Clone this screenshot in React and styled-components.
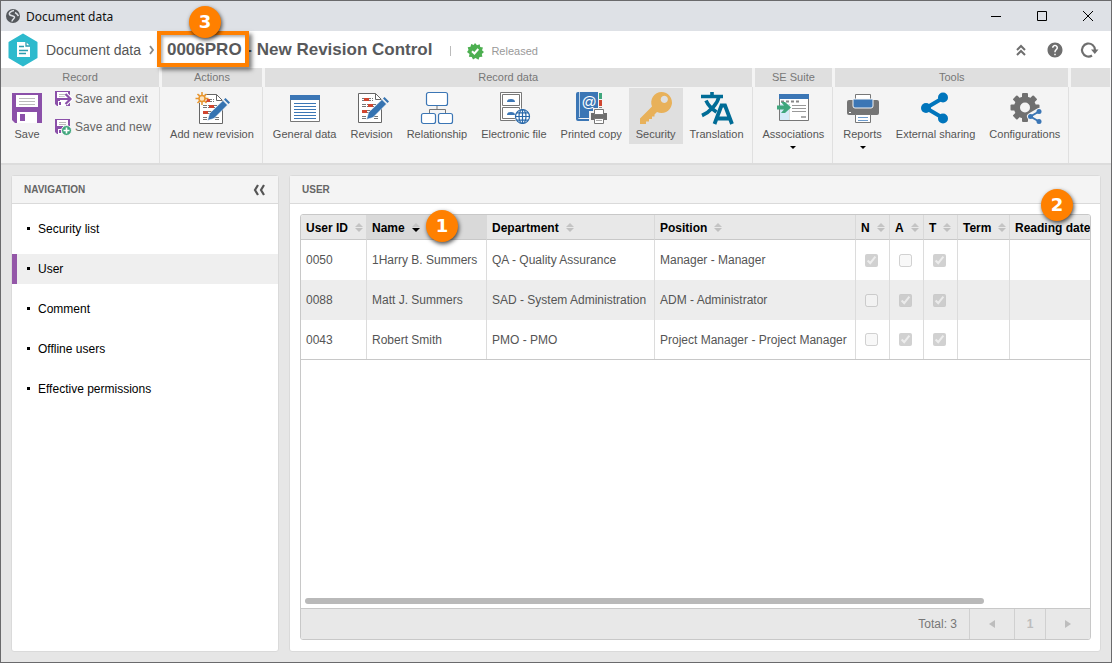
import React from "react";
import styled, { createGlobalStyle } from "styled-components";
import { MdHelp } from "react-icons/md";

const GlobalStyle = createGlobalStyle`
    * {
        box-sizing: border-box;
    }

    body {
        margin: 0;
        font-family: "Liberation Sans", Arial, sans-serif;
        font-size: 12px;
        color: #555;
    }

    button {
        font: inherit;
        color: inherit;
        background: none;
        border: 0;
        padding: 0;
    }

    svg {
        display: block;
        flex: none;
    }
`;

const Window = styled.div`
    display: flex;
    flex-direction: column;
    min-height: 100vh;
    border: 1px solid #6a6a6c;
    background: #e6e6e6;
`;

const TitleBar = styled.div`
    display: flex;
    align-items: center;
    height: 30px;
    padding-left: 5px;
    gap: 6px;
    background: #dee1e6;
    color: #111;
    font-family: "Noto Sans", sans-serif;
    font-size: 12px;
`;

const WindowControls = styled.div`
    display: flex;
    margin-left: auto;
`;

const IconButton = styled.button`
    display: flex;
    align-items: center;
    justify-content: center;
    width: ${(props) => props.$width};
    height: 30px;
`;

const Header = styled.header`
    display: flex;
    align-items: center;
    height: 37px;
    padding: 0 5px 0 7px;
    background: white;
`;

const Crumb = styled.a`
    margin: 0 8px;
    font-size: 14px;
    line-height: 20px;
    color: #555;
    text-decoration: none;
`;

const Title = styled.h1`
    margin: 0 0 0 12px;
    font-size: 17px;
    line-height: 20px;
    font-weight: 700;
    color: #58595b;
`;

const Marked = styled.span`
    position: relative;
    display: inline-block;
`;

const Frame = styled.span`
    position: absolute;
    inset: -9px -7px -7px -10px;
    border: 4px solid #ff8000;
    box-shadow: 3px 3px 4px rgba(0, 0, 0, 0.5), inset 2px 2px 3px rgba(0, 0, 0, 0.3);
`;

const Badge = styled.span`
    position: absolute;
    z-index: 2;
    top: ${(props) => props.$top};
    left: ${(props) => props.$left};
    right: ${(props) => props.$right};
    width: 32px;
    height: 32px;
    border-radius: 50%;
    background: #ff8000;
    box-shadow: 1px 2px 4px rgba(0, 0, 0, 0.7);
    color: white;
    font-family: "DejaVu Sans", sans-serif;
    font-size: 18px;
    font-weight: 700;
    line-height: 32px;
    text-align: center;
`;

const Status = styled.div`
    display: flex;
    align-items: center;
    gap: 8px;
    margin-left: 18px;
    padding-top: 3px;
    font-size: 11px;
    color: #999;
`;

const Divider = styled.span`
    width: 1px;
    height: 10px;
    margin-right: 8px;
    background: #bbb;
`;

const HeaderActions = styled.div`
    display: flex;
    margin-left: auto;
    color: #6e6e6e;
`;

const Ribbon = styled.div`
    display: flex;
    height: 97px;
    background: #f4f4f4;
    border-bottom: 2px solid #dcdcdc;
`;

const Group = styled.section`
    display: flex;
    flex-direction: column;
    flex: ${(props) => (props.$fill ? "1" : "none")};
`;

const GroupTitle = styled.h2`
    height: 19px;
    margin: 0 1px 0 2px;
    background: #dfdfdf;
    color: #777;
    font-size: 11px;
    font-weight: 400;
    line-height: 19px;
    text-align: center;

    ${Group}:first-child & {
        margin-left: 0;
    }
`;

const GroupBody = styled.div`
    display: flex;
    flex: 1;
    align-items: flex-start;
    padding: 1px 1px 0 3px;
    border-right: 1px solid #e0e0e0;

    ${Group}:last-child & {
        border-right: 0;
    }
`;

const Tool = styled.button`
    display: flex;
    flex-direction: column;
    align-items: center;
    height: 56px;
    padding: 4px 7px 0;
    background: ${(props) => (props.$active ? "#dfdfdf" : "none")};
    font-size: 11px;
    line-height: 20px;
    white-space: nowrap;
`;

const Caret = styled.span`
    flex: none;
    margin-top: 2px;
    border: 3px solid transparent;
    border-top-color: black;
`;

const SmallTools = styled.div`
    display: flex;
    flex-direction: column;
    gap: 8px;
    padding: 1px 7px 0 5px;
`;

const SmallTool = styled.button`
    display: flex;
    align-items: center;
    gap: 4px;
    height: 20px;
    font-size: 12px;
    color: #666;
    white-space: nowrap;
`;

const Main = styled.main`
    display: grid;
    flex: 1;
    grid-template-columns: 268px minmax(0, 1fr);
    gap: 10px;
    padding: 10px;
`;

const Panel = styled.section`
    position: relative;
    display: flex;
    flex-direction: column;
    border: 1px solid #dadada;
    border-radius: 3px;
    background: white;
`;

const PanelHeader = styled.div`
    display: flex;
    align-items: center;
    justify-content: space-between;
    height: 28px;
    padding: 0 12px;
    border-bottom: 1px solid #dadada;
    background: #f4f4f4;
`;

const PanelTitle = styled.h2`
    margin: 0;
    color: #666;
    font-size: 10px;
    font-weight: 700;
`;

const NavList = styled.ul`
    display: flex;
    flex-direction: column;
    gap: 10px;
    margin: 0;
    padding: 10px 0;
    list-style: none;
`;

const NavLink = styled.a`
    display: flex;
    align-items: center;
    height: 30px;
    gap: 8px;
    padding-left: 10px;
    border-left: 5px solid ${(props) => (props.$active ? "#9457a8" : "transparent")};
    background: ${(props) => (props.$active ? "#efefef" : "none")};
    color: black;
    text-decoration: none;

    &::before {
        content: "";
        width: 3px;
        height: 3px;
        margin-bottom: 2px;
        background: black;
    }
`;

const Grid = styled.div`
    display: flex;
    flex: 1;
    flex-direction: column;
    margin: 10px 9px 11px 10px;
    border: 1px solid #c8c8c8;
    border-radius: 3px;
    overflow: hidden;
`;

const TableArea = styled.div`
    flex: 1;
    overflow: hidden;
`;

const Table = styled.table`
    width: 100%;
    min-width: 910px;
    table-layout: fixed;
    border-collapse: separate;
    border-spacing: 0;
    border-bottom: 1px solid #c8c8c8;
`;

const HeadCell = styled.th`
    width: ${(props) => props.$width};
    height: 25px;
    padding: 1px 0 0 5px;
    border-right: 1px solid #d9d9d9;
    border-bottom: 1px solid #c8c8c8;
    background: ${(props) => (props.$sorted ? "#d9d9d9" : "#e8e8e8")};
    text-align: left;
`;

const SortButton = styled.button`
    display: flex;
    align-items: center;
    gap: 7px;
    color: black;
    font-weight: 700;
    white-space: nowrap;
`;

const Row = styled.tr`
    &:nth-child(even) {
        background: #ededed;
    }
`;

const Cell = styled.td`
    height: 40px;
    padding: 0 0 0 ${(props) => (props.$check ? "9px" : "5px")};
    border-right: 1px solid #dcdcdc;
    white-space: nowrap;

    ${Row}:last-child & {
        height: 39px;
    }
`;

const Check = styled.input`
    display: block;
    width: 13px;
    height: 13px;
    margin: 0;
`;

const ScrollTrack = styled.div`
    padding: 0 4px 4px;
`;

const ScrollThumb = styled.div`
    width: 87%;
    height: 6px;
    border-radius: 3px;
    background: #b9b9b9;
`;

const Footer = styled.div`
    display: flex;
    align-items: stretch;
    justify-content: flex-end;
    height: 31px;
    border-top: 1px solid #c8c8c8;
    background: #e8e8e8;
    color: #777;
    line-height: 30px;
`;

const Total = styled.span`
    padding-right: 12px;
`;

const PageButton = styled.button`
    display: flex;
    align-items: center;
    justify-content: center;
    width: ${(props) => (props.$number ? "31px" : "45px")};
    border-left: 1px solid #d0d0d0;
    color: #bdbdbd;
    font-weight: 700;
`;

const Icon = ({ children, size = 32, box = size }) => (
    <svg width={size} height={size} viewBox={`0 0 ${box} ${box}`} fill="none" overflow="visible" aria-hidden="true">
        {children}
    </svg>
);

const SaveIcon = () => (
    <Icon>
        <path d="M1 1h30v30H4l-3-3z" fill="#8b50a9" />
        <path d="M5 3h22v12H5zM6 20h20v11H6z" fill="#fff" />
        <path d="M8 6.5h16M8 9.5h16M8 12.5h16" stroke="#bbb" />
        <path d="M9 22h5v7H9z" fill="#8b50a9" />
    </Icon>
);

const SmallSaveIcon = ({ plus }) => (
    <Icon size={16}>
        <path d="M0 0h15v15H2l-2-2z" fill="#8b50a9" />
        <path d="M2 1h11v6H2zM3 10h8v5H3z" fill="#fff" />
        <path d="M4 3.5h7M4 5.5h7" stroke="#bbb" />
        <path d="M4 11h2v3H4z" fill="#8b50a9" />
        {plus ? (
            <>
                <circle cx="11.5" cy="11.5" r="5" fill="#3fa67c" stroke="#f4f4f4" />
                <path d="M8.5 11.5h6M11.5 8.5v6" stroke="#fff" strokeWidth="1.6" />
            </>
        ) : (
            <>
                <path d="M5 8h10M10.5 3l5 5-5 5" stroke="#fff" strokeWidth="4.500" />
                <path d="M5 8h10M10.5 3l5 5-5 5" stroke="#8b50a9" strokeWidth="2.200" />
            </>
        )}
    </Icon>
);

const RevisionIcon = ({ star }) => (
    <Icon>
        <g transform={star ? "translate(1 1)" : undefined}>
            <path d="M2.5 1.5h17l6 6v23h-23z" fill="#fff" stroke="#666" />
            <path d="M19.5 1.5v6h6" stroke="#666" />
            <path d="M6 6.5h11M6 8.5h11M6 12.5h16M6 14.5h12M6 18.5h11M6 20.5h9M6 24.5h5M6 26.5h5M18 24.5h4M18 26.5h4" stroke="#777" strokeDasharray="4 1" />
            <path d="M8 6h5v3H8zM12 12h5v3h-5zM6 18h5v3H6z" fill="#d0452f" />
            <path d="M10.500 27.500l2-7L26 7.500l4.500 4.500L17 25.500z" fill="#3573b1" stroke="#fff" strokeWidth=".6" />
            <path d="M27 6.500l1.500-1.500 4.500 4.500-1.500 1.500z" fill="#3573b1" />
        </g>
        {star && (
            <>
                <circle cx="6" cy="6.500" r="5" fill="#f4f4f4" />
                <path d="M6 0v13M-.5 6.500h13M1.500 2l9 9M10.500 2l-9 9" stroke="#e8952c" strokeWidth="1.500" />
                <circle cx="6" cy="6.500" r="3" fill="#fbe3c0" stroke="#e8952c" strokeWidth="1.500" />
            </>
        )}
    </Icon>
);

const GeneralIcon = () => (
    <Icon>
        <path d="M1.500 3.500h29v26h-29z" fill="#fff" stroke="#777" />
        <path d="M1 3h30v5H1z" fill="#3b76b5" />
        <path d="M5 11.500h22M5 14.500h22M5 17.500h22M5 20.500h22M5 23.500h22M5 26.500h22" stroke="#3b76b5" />
    </Icon>
);

const RelationshipIcon = () => (
    <Icon>
        <path d="M16 14v3.500M8.500 21v-3.500h16V21" stroke="#777" />
        <g fill="#fff" stroke="#3b76b5" strokeWidth="1.200">
            <rect x="5.500" y=".5" width="21" height="13" rx="2" />
            <rect x=".5" y="21.500" width="14" height="10" rx="2" />
            <rect x="17.500" y="21.500" width="14" height="10" rx="2" />
        </g>
    </Icon>
);

const ElectronicIcon = () => (
    <Icon>
        <path d="M2.500.5h21v28h-21z" fill="#fff" stroke="#777" />
        <path d="M4.500 2.500h17v11h-17zM4.500 15.500h17v11h-17z" stroke="#777" />
        <path d="M9 10q0-3 4-3t4 3zM9 23q0-3 4-3t4 3z" fill="#3b76b5" />
        <circle cx="24.500" cy="24.500" r="8" fill="#f4f4f4" />
        <g stroke="#2868a9" strokeWidth="1.200">
            <circle cx="24.500" cy="24.500" r="7" fill="#fff" />
            <ellipse cx="24.500" cy="24.500" rx="3.500" ry="7" />
            <path d="M24.500 17.500v14M17.500 24.500h14M18.500 20.800h12M18.500 28.200h12" />
        </g>
    </Icon>
);

const PrintedIcon = () => (
    <Icon>
        <path d="M3 0h20v26H5q-2 0-2 1h17v2H3q-2 0-2-2V2q0-2 2-2z" fill="#3b76b5" />
        <path d="M4.500 0v25" stroke="#b9d2ea" />
        <path d="M24 1h3v6h-3z" fill="#3fa67c" />
        <path d="M24 8h3v6h-3z" fill="#d0452f" />
        <path d="M24 15h3v4h-3z" fill="#888" />
        <text x="14" y="15" fill="#fff" fontSize="15" textAnchor="middle" fontFamily="Liberation Sans, sans-serif">@</text>
        <path d="M14 19h4v-3h12v3h3v11h-4v3H18v-3h-4z" fill="#f4f4f4" />
        <path d="M16 21h16v7H16z" fill="#6d6d6d" />
        <path d="M19.500 17.500h9v5h-9zM19.500 26.500h9v5h-9z" fill="#fff" stroke="#777" />
        <path d="M21 28.500h6" stroke="#aaa" />
    </Icon>
);

const KeyIcon = () => (
    <Icon>
        <path
            d="M21.500 0a10.500 10.500 0 1 1-4.500 20l-2.500 2.500v2h-2.500v2.500H9v2.500H6V32H0v-5.500L12 14.500A10.500 10.500 0 0 1 21.500 0zm2.800 3.800a3.600 3.600 0 1 0 .01 0z"
            fill="#e8b15a"
        />
    </Icon>
);

const TranslationIcon = () => (
    <Icon>
        <g stroke="#006c96" strokeWidth="3.600">
            <path d="M0 4.500h22M11 0v4.500M18 4.500C16.500 12 9 20 1 23.500M5 8.500C7 13 11 17 15.500 20" />
            <path d="M13.500 32l7-18.500h3.500l7 18.500M17 26.500h11" strokeWidth="3.800" />
        </g>
    </Icon>
);

const AssociationsIcon = () => (
    <Icon>
        <path d="M2.500 2.500h29v26h-29z" fill="#fff" stroke="#777" />
        <path d="M2 2h30v5H2z" fill="#3b76b5" />
        <path d="M4 9.500h18" stroke="#888" strokeWidth="2" strokeDasharray="3 2" />
        <path d="M3 12h9v16H3z" fill="#d5eaf8" />
        <path d="M12.500 12v16" stroke="#ddd" />
        <path d="M15 13.500h14M15 16.500h14M15 19.500h14" stroke="#999" />
        <path d="M24 24h5v2h-5z" fill="#aaa" />
        <path d="M0 13.500h7L4 10h4l6 5.500L8 21H4l3-3.500H0z" fill="#3fa67c" />
    </Icon>
);

const ReportsIcon = () => (
    <Icon>
        <path d="M2 8h28q2 0 2 2v11q0 2-2 2H2q-2 0-2-2V10q0-2 2-2z" fill="#757575" />
        <path d="M8.500 2.500h15v8h-15z" fill="#fff" stroke="#777" />
        <path d="M6 7h20v7q0 2-2 2H8q-2 0-2-2z" fill="#3b76b5" stroke="#f4f4f4" />
        <path d="M2 20.500h2" stroke="#fff" />
        <path d="M8.500 22.500h15v8h-15z" fill="#fff" stroke="#777" />
        <path d="M11 25.500h10M11 28.500h10" stroke="#6d9bcc" />
    </Icon>
);

const ShareIcon = () => (
    <Icon>
        <path d="M23 6L6 16l17 10" stroke="#0075bc" strokeWidth="4" />
        <g fill="#0075bc">
            <circle cx="6" cy="16" r="5" />
            <circle cx="23" cy="5.500" r="5" />
            <circle cx="23" cy="26.500" r="5" />
        </g>
    </Icon>
);

const ConfigIcon = () => (
    <Icon>
        <g fill="#707070">
            {[0, 45, 90, 135].map((angle) => (
                <rect key={angle} x="13" y="1" width="6" height="29" rx="1" transform={`rotate(${angle} 16 15.5)`} />
            ))}
            <circle cx="16" cy="15.500" r="11" />
        </g>
        <circle cx="16" cy="15.500" r="5" fill="#f4f4f4" />
        <path d="M30 19.500L21.500 24.500l8.500 5" stroke="#f4f4f4" strokeWidth="7" strokeLinejoin="round" strokeLinecap="round" />
        <path d="M30 19.500L21.500 24.500l8.500 5" stroke="#3b76b5" strokeWidth="2" />
        <g fill="#3b76b5">
            <circle cx="21.500" cy="24.500" r="2.500" />
            <circle cx="30" cy="19.500" r="2.500" />
            <circle cx="30" cy="29.500" r="2.500" />
        </g>
    </Icon>
);

const GlobeIcon = () => (
    <Icon size={14}>
        <circle cx="7" cy="7" r="7" fill="#54585c" />
        <path d="M8 1.500C5 2 2.500 4 3.500 5.500S8 6.500 8.500 8 6 10.500 6 12.500" stroke="#dee1e6" strokeWidth="1.500" />
        <path d="M9 3.500q2 1 3.500 3.500" stroke="#dee1e6" strokeWidth="1.500" />
    </Icon>
);

const DocumentIcon = () => (
    <svg width="30" height="34" viewBox="0 0 30 34" fill="none" aria-hidden="true">
        <path d="M15 1.500L28.500 9.500v15L15 32.500 1.500 24.500v-15z" fill="#2dbacd" stroke="#2dbacd" strokeWidth="2" strokeLinejoin="round" />
        <path d="M9 9h9l4 4v11H9z" fill="#fff" />
        <path d="M18 9v4h4M11 13.500h5M11 17.500h9M11 20.500h7" stroke="#2a9cae" strokeWidth="1.300" />
    </svg>
);

const ReleasedIcon = () => (
    <Icon size={16}>
        <path
            d="M8 0l2 2.200 2.700-1 .5 2.800 2.800.5-1 2.700L17 9l-2.200 2 .6 2.800-2.900.2-1 2.700L8.500 15l-2.500 1.500-1.200-2.600-2.900-.2.600-2.800L0 9l1.500-2-.8-2.700 2.800-.5.7-2.700 2.500.8z"
            fill="#4caf50"
        />
        <path d="M5 8.200l2.400 2.300L11.300 6" stroke="#fff" strokeWidth="2" />
    </Icon>
);

const SortIcon = ({ sorted }) => (
    <svg width="8" height="9" viewBox="0 0 8 9" aria-hidden="true">
        <path d="M0 4l4-4 4 4z" fill="#c4c4c4" />
        <path d="M0 5h8L4 9z" fill={sorted ? "#000" : "#c0c0c0"} />
    </svg>
);

const recordData = [
    { label: "General data", icon: GeneralIcon },
    { label: "Revision", icon: RevisionIcon },
    { label: "Relationship", icon: RelationshipIcon },
    { label: "Electronic file", icon: ElectronicIcon },
    { label: "Printed copy", icon: PrintedIcon },
    { label: "Security", icon: KeyIcon, active: true },
    { label: "Translation", icon: TranslationIcon },
];

const tools = [
    { label: "Reports", icon: ReportsIcon, menu: true },
    { label: "External sharing", icon: ShareIcon },
    { label: "Configurations", icon: ConfigIcon },
];

const navigation = ["Security list", "User", "Comment", "Offline users", "Effective permissions"];

const columns = [
    { label: "User ID", width: "66px" },
    { label: "Name", width: "120px", sorted: true },
    { label: "Department", width: "168px" },
    { label: "Position", width: "201px" },
    { label: "N", width: "34px" },
    { label: "A", width: "34px" },
    { label: "T", width: "34px" },
    { label: "Term", width: "52px" },
    { label: "Reading date" },
];

const users = [
    { id: "0050", name: "1Harry B. Summers", department: "QA - Quality Assurance", position: "Manager - Manager", flags: [true, false, true] },
    { id: "0088", name: "Matt J. Summers", department: "SAD - System Administration", position: "ADM - Administrator", flags: [false, true, true] },
    { id: "0043", name: "Robert Smith", department: "PMO - PMO", position: "Project Manager - Project Manager", flags: [false, true, true] },
];

const ToolList = ({ items }) =>
    items.map(({ label, icon: ToolIcon, active, menu }) => (
        <Tool key={label} $active={active}>
            <ToolIcon />
            {label}
            {menu && <Caret />}
        </Tool>
    ));

const RibbonGroup = ({ title, fill, children }) => (
    <Group $fill={fill}>
        <GroupTitle>{title}</GroupTitle>
        <GroupBody>{children}</GroupBody>
    </Group>
);

const UserTable = () => (
    <Table>
        <thead>
            <tr>
                {columns.map((column) => (
                    <HeadCell key={column.label} $width={column.width} $sorted={column.sorted}>
                        <SortButton>
                            {column.label}
                            <SortIcon sorted={column.sorted} />
                        </SortButton>
                    </HeadCell>
                ))}
            </tr>
        </thead>
        <tbody>
            {users.map((user) => (
                <Row key={user.id}>
                    <Cell>{user.id}</Cell>
                    <Cell>{user.name}</Cell>
                    <Cell>{user.department}</Cell>
                    <Cell>{user.position}</Cell>
                    {user.flags.map((flag, index) => (
                        <Cell key={index} $check>
                            <Check type="checkbox" aria-label={`${columns[index + 4].label} ${user.name}`} checked={flag} disabled readOnly />
                        </Cell>
                    ))}
                    <Cell />
                    <Cell />
                </Row>
            ))}
        </tbody>
    </Table>
);

const App = () => {
    return (
        <Window>
            <GlobalStyle />
            <TitleBar>
                <GlobeIcon />
                Document data
                <WindowControls>
                    <IconButton $width="46px" aria-label="Minimize">
                        <Icon size={10}>
                            <path d="M0 5.500h10" stroke="#000" />
                        </Icon>
                    </IconButton>
                    <IconButton $width="46px" aria-label="Maximize">
                        <Icon size={10}>
                            <path d="M.5.5h9v9h-9z" stroke="#000" />
                        </Icon>
                    </IconButton>
                    <IconButton $width="46px" aria-label="Close">
                        <Icon size={10}>
                            <path d="M0 0l10 10M10 0L0 10" stroke="#000" />
                        </Icon>
                    </IconButton>
                </WindowControls>
            </TitleBar>
            <Header>
                <DocumentIcon />
                <Crumb href="#">Document data</Crumb>
                <svg width="6" height="10" viewBox="0 0 6 10" fill="none" aria-hidden="true">
                    <path d="M1 1l3 4-3 4" stroke="#888" strokeWidth="1.800" />
                </svg>
                <Title>
                    <Marked>
                        0006PRO
                        <Frame />
                        <Badge $top="-34px" $left="22px">3</Badge>
                    </Marked>
                    {" - New Revision Control"}
                </Title>
                <Status>
                    <Divider />
                    <ReleasedIcon />
                    Released
                </Status>
                <HeaderActions>
                    <IconButton $width="34px" aria-label="Collapse ribbon">
                        <Icon size={12}>
                            <path d="M2 6l4-4 4 4M2 11l4-4 4 4" stroke="currentColor" strokeWidth="2" />
                        </Icon>
                    </IconButton>
                    <IconButton $width="34px" aria-label="Help">
                        <MdHelp size={18} />
                    </IconButton>
                    <IconButton $width="34px" aria-label="Refresh">
                        <Icon size={18}>
                            <path d="M12 14.500A6.500 6.500 0 1 1 15 9" stroke="currentColor" strokeWidth="2.200" />
                            <path d="M11 8.500h7.500L14.800 13z" fill="currentColor" />
                        </Icon>
                    </IconButton>
                </HeaderActions>
            </Header>
            <Ribbon>
                <RibbonGroup title="Record">
                    <ToolList items={[{ label: "Save", icon: SaveIcon }]} />
                    <SmallTools>
                        <SmallTool>
                            <SmallSaveIcon />
                            Save and exit
                        </SmallTool>
                        <SmallTool>
                            <SmallSaveIcon plus />
                            Save and new
                        </SmallTool>
                    </SmallTools>
                </RibbonGroup>
                <RibbonGroup title="Actions">
                    <ToolList items={[{ label: "Add new revision", icon: () => <RevisionIcon star /> }]} />
                </RibbonGroup>
                <RibbonGroup title="Record data">
                    <ToolList items={recordData} />
                </RibbonGroup>
                <RibbonGroup title="SE Suite">
                    <ToolList items={[{ label: "Associations", icon: AssociationsIcon, menu: true }]} />
                </RibbonGroup>
                <RibbonGroup title="Tools">
                    <ToolList items={tools} />
                </RibbonGroup>
                <RibbonGroup fill />
            </Ribbon>
            <Main>
                <Panel>
                    <PanelHeader>
                        <PanelTitle>NAVIGATION</PanelTitle>
                        <button aria-label="Collapse navigation">
                            <Icon size={14}>
                                <path d="M6 2L3 7l3 5M12 2L9 7l3 5" stroke="#555" strokeWidth="2.200" />
                            </Icon>
                        </button>
                    </PanelHeader>
                    <NavList>
                        {navigation.map((item) => (
                            <li key={item}>
                                <NavLink href="#" $active={item === "User"}>
                                    {item}
                                </NavLink>
                            </li>
                        ))}
                    </NavList>
                </Panel>
                <Panel>
                    <PanelHeader>
                        <PanelTitle>USER</PanelTitle>
                    </PanelHeader>
                    <Grid>
                        <TableArea>
                            <UserTable />
                        </TableArea>
                        <ScrollTrack>
                            <ScrollThumb />
                        </ScrollTrack>
                        <Footer>
                            <Total>Total: 3</Total>
                            <PageButton aria-label="Previous page">
                                <svg width="6" height="8" viewBox="0 0 6 8" fill="currentColor">
                                    <path d="M6 0v8L0 4z" />
                                </svg>
                            </PageButton>
                            <PageButton $number>1</PageButton>
                            <PageButton aria-label="Next page">
                                <svg width="6" height="8" viewBox="0 0 6 8" fill="currentColor">
                                    <path d="M0 0v8l6-4z" />
                                </svg>
                            </PageButton>
                        </Footer>
                    </Grid>
                    <Badge $top="34px" $left="136px">1</Badge>
                    <Badge $top="13px" $right="27px">2</Badge>
                </Panel>
            </Main>
        </Window>
    );
};

export default App;
